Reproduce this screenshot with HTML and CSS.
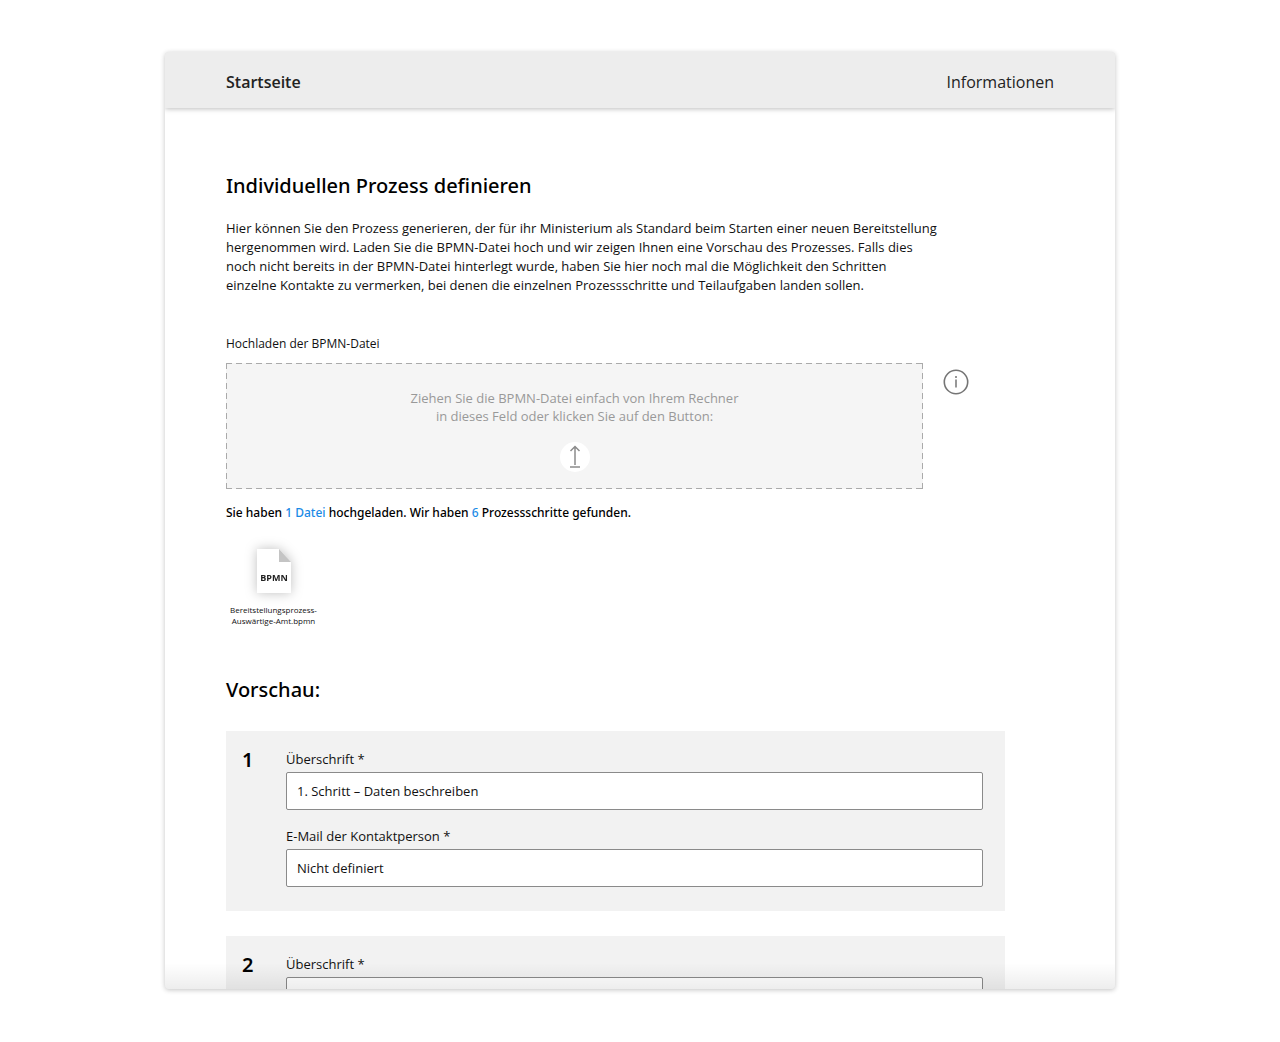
FILE: index.html
```html
<!DOCTYPE html>
<html lang="de">
<head>
<meta charset="utf-8">
<meta name="viewport" content="width=device-width, initial-scale=1">
<title>Individuellen Prozess definieren</title>
<link rel="stylesheet" href="styles.css">
</head>
<body>
<div class="window">
  <header class="topbar">
    <nav class="topnav">
      <a class="topnav-link topnav-link-active" href="#start">Startseite</a>
      <a class="topnav-link" href="#info">Informationen</a>
    </nav>
  </header>
  <main class="content">
    <h1 class="title">Individuellen Prozess definieren</h1>
    <p class="intro">Hier können Sie den Prozess generieren, der für ihr Ministerium als Standard beim Starten einer neuen Bereitstellung<br>
      hergenommen wird. Laden Sie die BPMN-Datei hoch und wir zeigen Ihnen eine Vorschau des Prozesses. Falls dies<br>
      noch nicht bereits in der BPMN-Datei hinterlegt wurde, haben Sie hier noch mal die Möglichkeit den Schritten<br>
      einzelne Kontakte zu vermerken, bei denen die einzelnen Prozessschritte und Teilaufgaben landen sollen.</p>

    <section class="upload" aria-labelledby="upload-label">
      <h2 class="upload-label" id="upload-label">Hochladen der BPMN-Datei</h2>
      <div class="upload-row">
        <div class="dropzone">
          <p class="dropzone-text">Ziehen Sie die BPMN-Datei einfach von Ihrem Rechner<br>in dieses Feld oder klicken Sie auf den Button:</p>
          <button class="upload-button" type="button" aria-label="Datei hochladen">
            <svg width="30" height="30" viewBox="0 0 30 30" fill="none" stroke="#8c8c8c" stroke-width="1.5" aria-hidden="true">
              <path d="M15 23V4.500M10.500 9 15 4.500l4.500 4.500M10 25h10"/>
            </svg>
          </button>
        </div>
        <button class="info-button" type="button" aria-label="Hilfe zum Hochladen">
          <svg width="26" height="26" viewBox="0 0 26 26" fill="none" stroke="#757575" aria-hidden="true">
            <circle cx="13" cy="13" r="11.700" stroke-width="1.600"/>
            <path d="M13 10.500v8" stroke-width="1.500"/>
            <circle cx="13" cy="8" r="1" fill="#757575" stroke="none"/>
          </svg>
        </button>
      </div>
      <p class="status">Sie haben <span class="accent">1 Datei</span> hochgeladen. Wir haben <span class="accent">6</span> Prozessschritte gefunden.</p>
      <figure class="file">
        <svg class="file-icon" width="36" height="46" viewBox="0 0 36 46" aria-hidden="true">
          <path d="M1 1h22l12 13v31H1z" fill="#fff"/>
          <path d="M23 1v13h12z" fill="#c4c4c4"/>
          <text class="file-type" x="18" y="33" text-anchor="middle">BPMN</text>
        </svg>
        <figcaption class="file-name">Bereitstellungsprozess-<br>Auswärtige-Amt.bpmn</figcaption>
      </figure>
    </section>

    <section class="preview">
      <h2 class="title">Vorschau:</h2>
      <ol class="steps">
        <li class="step">
          <span class="step-number">1</span>
          <div class="fields">
            <div class="field">
              <label class="field-label" for="title-1">Überschrift *</label>
              <input class="field-input" id="title-1" type="text" value="1. Schritt – Daten beschreiben">
            </div>
            <div class="field">
              <label class="field-label" for="mail-1">E-Mail der Kontaktperson *</label>
              <input class="field-input" id="mail-1" type="text" value="Nicht definiert">
            </div>
          </div>
        </li>
        <li class="step">
          <span class="step-number">2</span>
          <div class="fields">
            <div class="field">
              <label class="field-label" for="title-2">Überschrift *</label>
              <input class="field-input" id="title-2" type="text">
            </div>
          </div>
        </li>
      </ol>
    </section>
  </main>
</div>
</body>
</html>
```

FILE: styles.css
```css
* {
  box-sizing: border-box;
  margin: 0;
}

body {
  height: 100vh;
  padding: 52px 24px 53px;
  background: #fff;
  color: #111;
  font-family: "Open Sans", "Noto Sans", sans-serif;
  font-size: 13px;
  line-height: 19px;
}

.window {
  position: relative;
  max-width: 950px;
  height: 100%;
  margin: 0 auto;
  overflow: hidden;
  border-radius: 4px;
  background: #fff;
  box-shadow: 0 1px 5px rgba(0, 0, 0, 0.24);
}

/* Fade that hints at more content below the fold */
.window::after {
  content: "";
  position: absolute;
  inset: auto 0 0;
  height: 26px;
  background: linear-gradient(rgba(0, 0, 0, 0), rgba(0, 0, 0, 0.07));
  pointer-events: none;
}

.topbar {
  padding: 0 61px;
  background: #ededed;
  box-shadow: 0 1px 5px rgba(0, 0, 0, 0.26);
}

.topnav {
  display: flex;
  align-items: center;
  justify-content: space-between;
  height: 56px;
  padding-top: 4px;
}

.topnav-link {
  color: #222;
  font-size: 16px;
  line-height: 24px;
  text-decoration: none;
}

.topnav-link-active {
  font-weight: 600;
}

.content {
  padding: 64px 110px 64px 61px;
}

.title,
.status,
.step-number {
  font-family: "Noto Sans", "Open Sans", sans-serif;
  font-weight: 500;
  color: #000;
}

.title {
  font-size: 20px;
  line-height: 28px;
}

.intro {
  margin-top: 19px;
  white-space: nowrap;
}

.upload {
  margin-top: 39px;
}

.upload-label {
  font-size: 12px;
  font-weight: 400;
  line-height: 20px;
}

.upload-row {
  display: flex;
  align-items: flex-start;
  gap: 20px;
  margin-top: 9px;
}

.dropzone {
  --dash: #aaa 0 6px, transparent 6px 10px;
  display: flex;
  flex: 0 1 697px;
  flex-direction: column;
  align-items: center;
  gap: 17px;
  padding: 26px 16px 17px;
  background:
    repeating-linear-gradient(90deg, var(--dash)) top / 100% 1px no-repeat,
    repeating-linear-gradient(90deg, var(--dash)) bottom / 100% 1px no-repeat,
    repeating-linear-gradient(var(--dash)) left / 1px 100% no-repeat,
    repeating-linear-gradient(var(--dash)) right / 1px 100% no-repeat,
    #f5f5f5;
}

.dropzone-text {
  color: #999;
  line-height: 18px;
  text-align: center;
}

.upload-button,
.info-button {
  padding: 0;
  border: 0;
  border-radius: 50%;
  background: #fff;
  cursor: pointer;
}

.upload-button svg,
.info-button svg {
  display: block;
}

.info-button {
  margin-top: 6px;
}

.status {
  margin-top: 14px;
  font-size: 12px;
  line-height: 20px;
}

.accent {
  color: #1a8ae6;
}

.file {
  display: flex;
  flex-direction: column;
  align-items: center;
  gap: 10px;
  width: 95px;
  margin-top: 25px;
}

.file-icon {
  overflow: visible;
  filter: drop-shadow(0 0 6px rgba(0, 0, 0, 0.25));
}

.file-type {
  fill: #222;
  font-size: 9px;
  font-weight: 700;
}

.file-name {
  font-size: 8px;
  line-height: 11px;
  text-align: center;
}

.preview {
  margin-top: 50px;
}

.steps {
  display: flex;
  flex-direction: column;
  gap: 25px;
  margin-top: 27px;
  padding: 0;
  list-style: none;
}

.step {
  display: flex;
  padding: 19px 22px 24px 16px;
  background: #f2f2f2;
}

.step-number {
  flex: 0 0 44px;
  font-size: 20px;
  font-weight: 600;
  line-height: 20px;
}

.fields {
  display: flex;
  flex: 1;
  flex-direction: column;
  gap: 17px;
}

.field {
  display: flex;
  flex-direction: column;
  gap: 3px;
}

.field-label {
  line-height: 19px;
}

.field-input {
  width: 100%;
  height: 38px;
  padding: 0 10px;
  border: 1px solid #8a8a8a;
  border-radius: 2px;
  background: #fff;
  color: #111;
  font-family: inherit;
  font-size: 13px;
}
```
